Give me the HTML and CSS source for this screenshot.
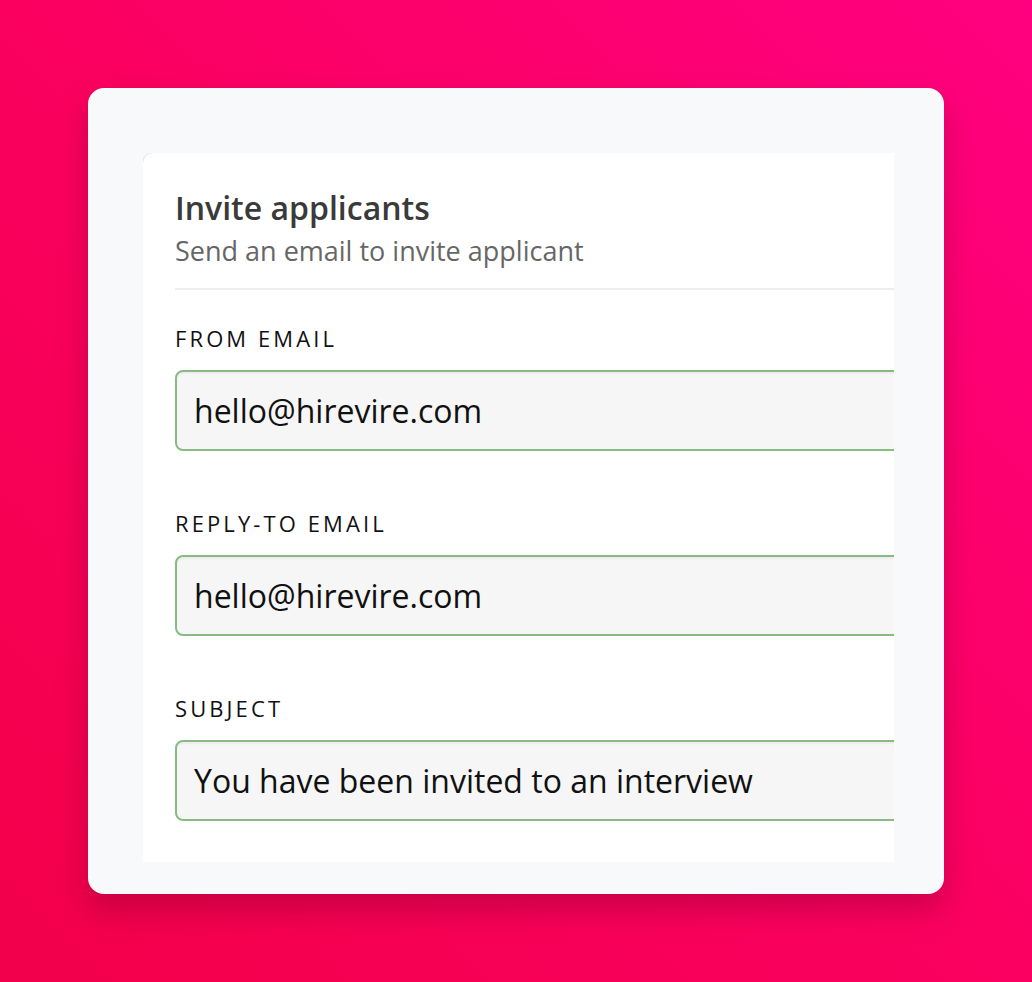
FILE: index.html
```html
<!DOCTYPE html>
<html>
<head>
<meta charset="utf-8">
<link rel="stylesheet" href="styles.css">
</head>
<body>
<div class="frame">
  <div class="viewport">
    <div class="panel">
      <div class="header">
        <h1 class="title">Invite applicants</h1>
        <p class="subtitle">Send an email to invite applicant</p>
      </div>
      <div class="field">
        <label class="label">FROM EMAIL</label>
        <div class="input">hello@hirevire.com</div>
      </div>
      <div class="field">
        <label class="label">REPLY-TO EMAIL</label>
        <div class="input">hello@hirevire.com</div>
      </div>
      <div class="field">
        <label class="label">SUBJECT</label>
        <div class="input">You have been invited to an interview</div>
      </div>
    </div>
  </div>
</div>
</body>
</html>
```
FILE: styles.css
```css
html, body {
  margin: 0;
  padding: 0;
}
body {
  width: 1032px;
  height: 982px;
  overflow: hidden;
  background: linear-gradient(225deg, #ff0080 0%, #fb0060 50%, #f2004a 100%);
  font-family: "Open Sans", "Noto Sans", sans-serif;
  padding-top: 88px;
  padding-left: 88px;
  box-sizing: border-box;
}
.frame {
  width: 856px;
  height: 806px;
  background: #f8f9fa;
  border-radius: 16px;
  box-shadow: 0 16px 30px rgba(120, 0, 40, 0.35);
  padding: 65px 50px 32px 55px;
  box-sizing: border-box;
}
.viewport {
  width: 751px;
  height: 709px;
  overflow: hidden;
}
.panel {
  width: 900px;
  height: 900px;
  background: #ffffff;
  border-radius: 10px;
  box-shadow: 0 0 2px rgba(0, 0, 0, 0.15), -1px 0 1px rgba(0,0,0,0.05);
  padding: 0 0 0 32px;
  box-sizing: border-box;
}
.header {
  padding-top: 33px;
  padding-bottom: 19px;
  border-bottom: 2px solid #eeeeee;
}
.title {
  margin: 0;
  font-size: 32px;
  font-weight: 600;
  color: #3a3a3a;
  line-height: 44px;
}
.subtitle {
  margin: 3px 0 0;
  font-size: 27px;
  color: #666666;
  line-height: 36px;
}
.field {
  padding-top: 34px;
}
.field + .field {
  padding-top: 58px;
}
.label {
  display: block;
  font-size: 22px;
  letter-spacing: 3.1px;
  color: #111111;
  line-height: 28px;
  margin-bottom: 18px;
}
.input {
  height: 81px;
  box-sizing: border-box;
  border: 2px solid #8aba84;
  border-radius: 8px;
  background: #f6f6f6;
  box-shadow: inset 0 2px 2px rgba(0,0,0,0.04);
  padding-left: 17px;
  display: flex;
  align-items: center;
  font-size: 32px;
  color: #111111;
}
```
